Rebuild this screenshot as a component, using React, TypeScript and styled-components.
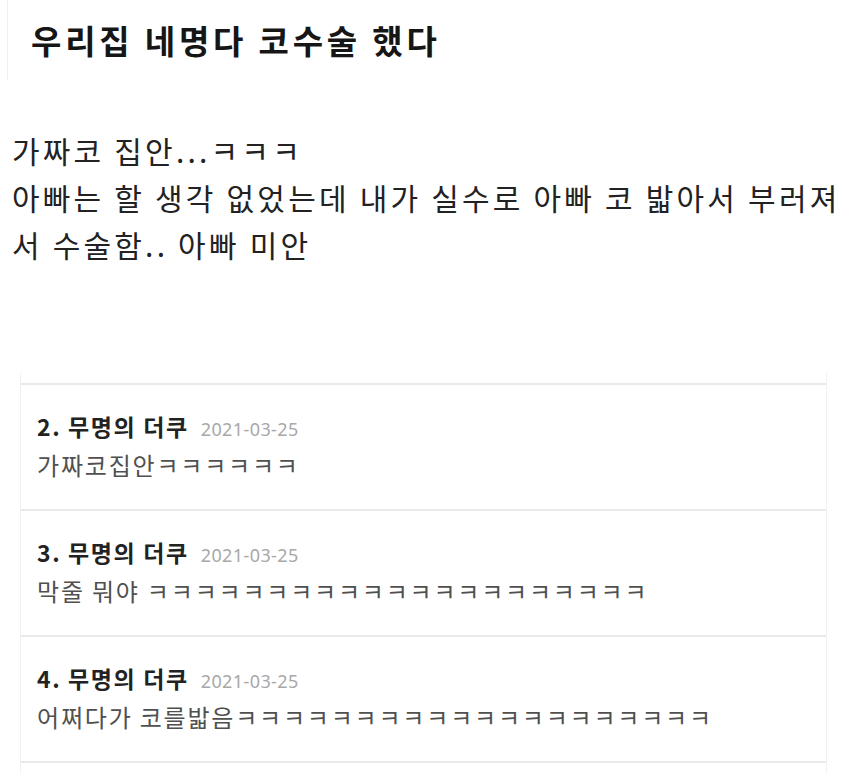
import React from 'react';
import styled, { createGlobalStyle } from 'styled-components';

const GlobalStyle = createGlobalStyle`
  html, body {
    margin: 0;
    padding: 0;
    background: #fff;
    overflow: hidden;
  }
  body {
    font-family: 'Noto Sans CJK KR', 'Noto Sans', sans-serif;
    color: #222;
  }
`;

interface Comment {
  no: number;
  author: string;
  date: string;
  text: string;
}

const comments: Comment[] = [
  { no: 2, author: '무명의 더쿠', date: '2021-03-25', text: '가짜코집안' + 'ㅋ'.repeat(6) },
  { no: 3, author: '무명의 더쿠', date: '2021-03-25', text: '막줄 뭐야 ' + 'ㅋ'.repeat(21) },
  { no: 4, author: '무명의 더쿠', date: '2021-03-25', text: '어쩌다가 코를밟음' + 'ㅋ'.repeat(20) },
];

const App: React.FC = () => {
  return (
    <Page>
      <GlobalStyle />
      <TitleBox>
        <Title>우리집 네명다 코수술 했다</Title>
      </TitleBox>

      <Post>
        가짜코 집안...ㅋㅋㅋ
        <br />
        아빠는 할 생각 없었는데 내가 실수로 아빠 코 밟아서 부러져
        <br />
        서 수술함.. 아빠 미안
      </Post>

      <CommentBox>
        {comments.map((c) => (
          <CommentRow key={c.no}>
            <CommentHead>
              {c.no}. {c.author}
              <CommentDate>{c.date}</CommentDate>
            </CommentHead>
            <CommentText>{c.text}</CommentText>
          </CommentRow>
        ))}
        <CommentEnd />
      </CommentBox>
    </Page>
  );
};

const Page = styled.div`
  width: 844px;
  display: flex;
  flex-direction: column;
  & > * {
    flex-shrink: 0;
  }
`;

const TitleBox = styled.div`
  margin-left: 7px;
  height: 80px;
  padding-left: 23px;
  box-sizing: border-box;
  border-left: 1px solid #efefef;
  display: flex;
  align-items: center;
`;

const Title = styled.h1`
  margin: 0;
  font-size: 33px;
  font-weight: 700;
  line-height: 1;
  letter-spacing: 3.8px;
  color: #161616;
`;

const Post = styled.p`
  margin: 47px 0 0;
  padding-left: 12px;
  font-size: 30px;
  line-height: 47px;
  letter-spacing: 3.2px;
  color: #222;
  white-space: nowrap;
`;

const CommentBox = styled.div`
  margin: 105px 0 0 20px;
  width: 805px;
  padding-top: 10px;
  border-left: 1px solid #f1f1f1;
  border-right: 1px solid #f1f1f1;
  display: flex;
  flex-direction: column;
`;

const CommentRow = styled.div`
  height: 126px;
  flex-shrink: 0;
  border-top: 2px solid #e9e9e9;
  padding: 27px 0 0 16px;
  box-sizing: border-box;
`;

const CommentHead = styled.div`
  font-size: 23px;
  font-weight: 700;
  line-height: 28px;
  color: #222;
  letter-spacing: 1.6px;
  display: flex;
  align-items: baseline;
`;

const CommentDate = styled.span`
  margin-left: 12px;
  font-family: 'Noto Sans', sans-serif;
  font-size: 18px;
  font-weight: 400;
  color: #a8a8a8;
  letter-spacing: 0.4px;
`;

const CommentText = styled.div`
  margin-top: 8px;
  font-size: 24px;
  line-height: 28px;
  letter-spacing: 1.8px;
  color: #505050;
  white-space: nowrap;
`;

const CommentEnd = styled.div`
  height: 20px;
  border-top: 2px solid #e9e9e9;
`;

export default App;
